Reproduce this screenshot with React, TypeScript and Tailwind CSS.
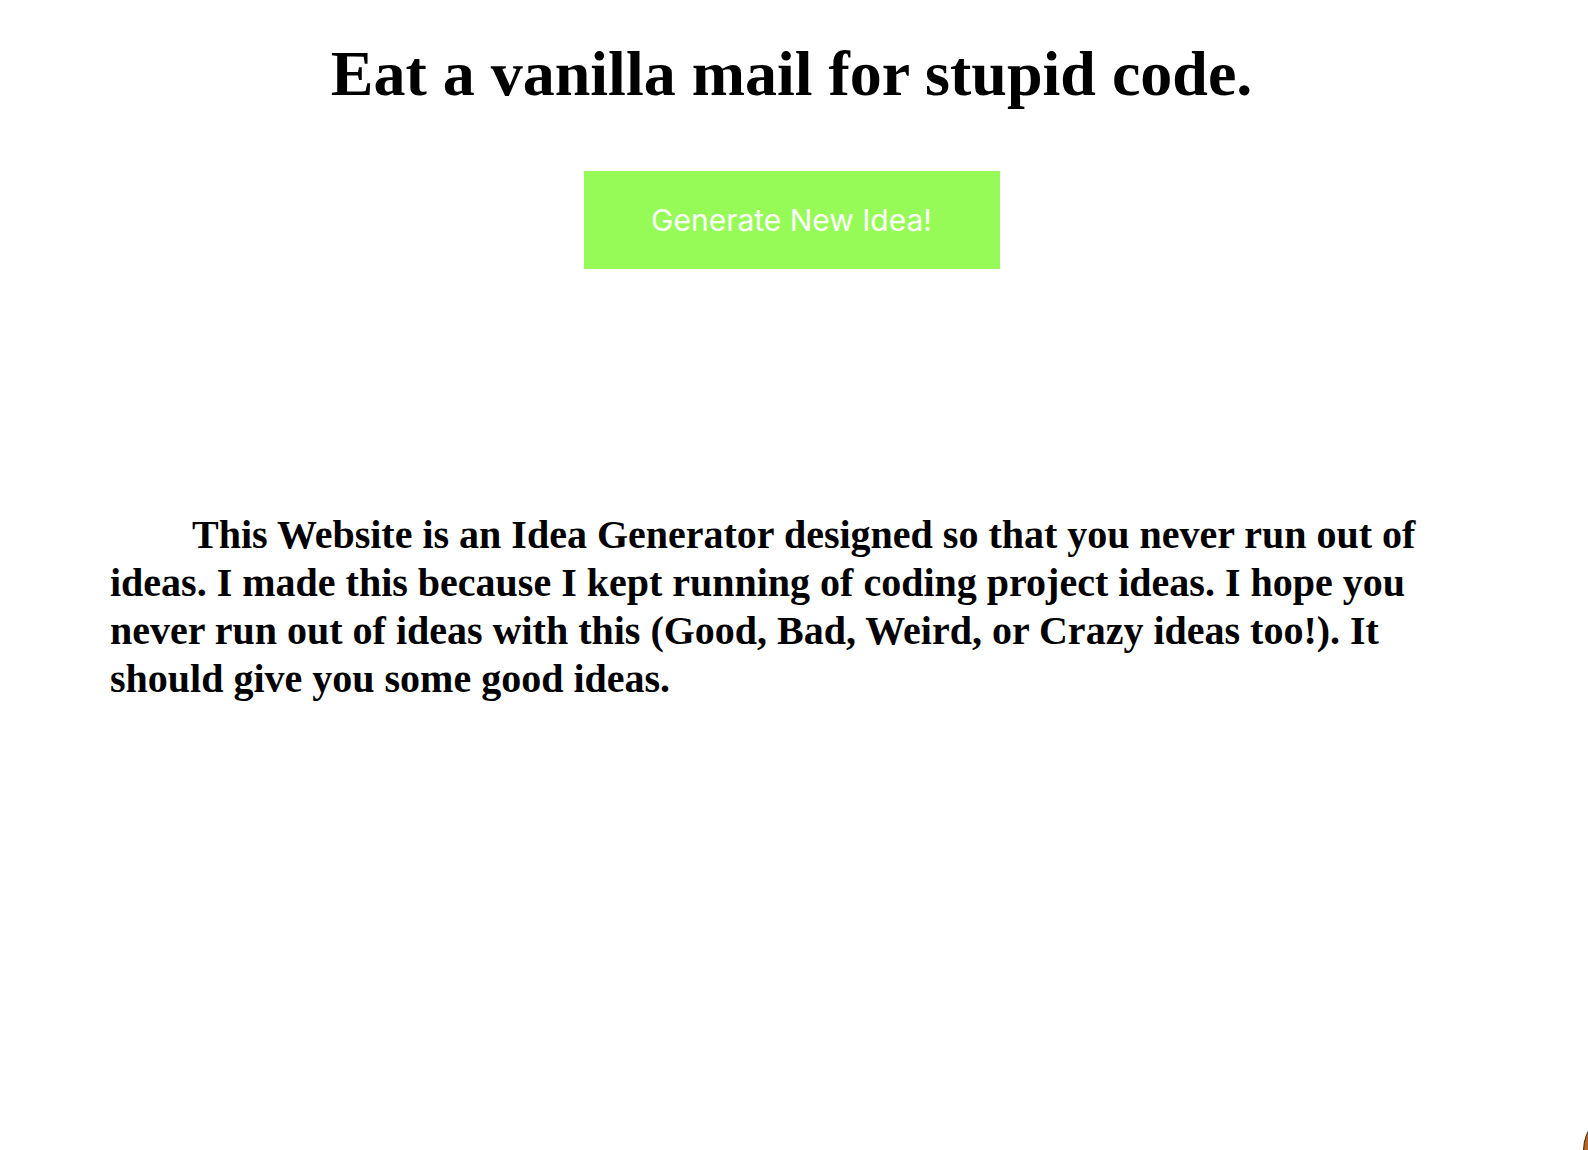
export default function App() {
  return (
    <div className="relative min-h-[1150px] w-full overflow-hidden bg-white">
      <div className="flex flex-col items-center pr-[5px] pt-[38px]">
        <h1 className="font-['Liberation_Serif',serif] text-[64px] font-bold leading-[71px] text-black">
          Eat a vanilla mail for stupid code.
        </h1>
        <button
          type="button"
          className="mt-[62px] flex h-[98px] w-[416px] items-center justify-center bg-[#96fb56] font-['Inter',sans-serif] text-[30px] text-white"
        >
          Generate New Idea!
        </button>
      </div>

      <p className="ml-[110px] mr-[130px] mt-[242px] indent-[82px] font-['Liberation_Serif',serif] text-[40px] font-bold leading-[48px] text-black">
        This Website is an Idea Generator designed so that you never run out of ideas. I made this
        because I kept running of coding project ideas. I hope you never run out of ideas with
        this (Good, Bad, Weird, or Crazy ideas too!). It should give you some good ideas.
      </p>

      <div className="absolute left-[1583px] top-[1108px] h-[85px] w-[85px] rounded-full border border-[#3a1d08] bg-[#b8651f]" />
    </div>
  );
}
